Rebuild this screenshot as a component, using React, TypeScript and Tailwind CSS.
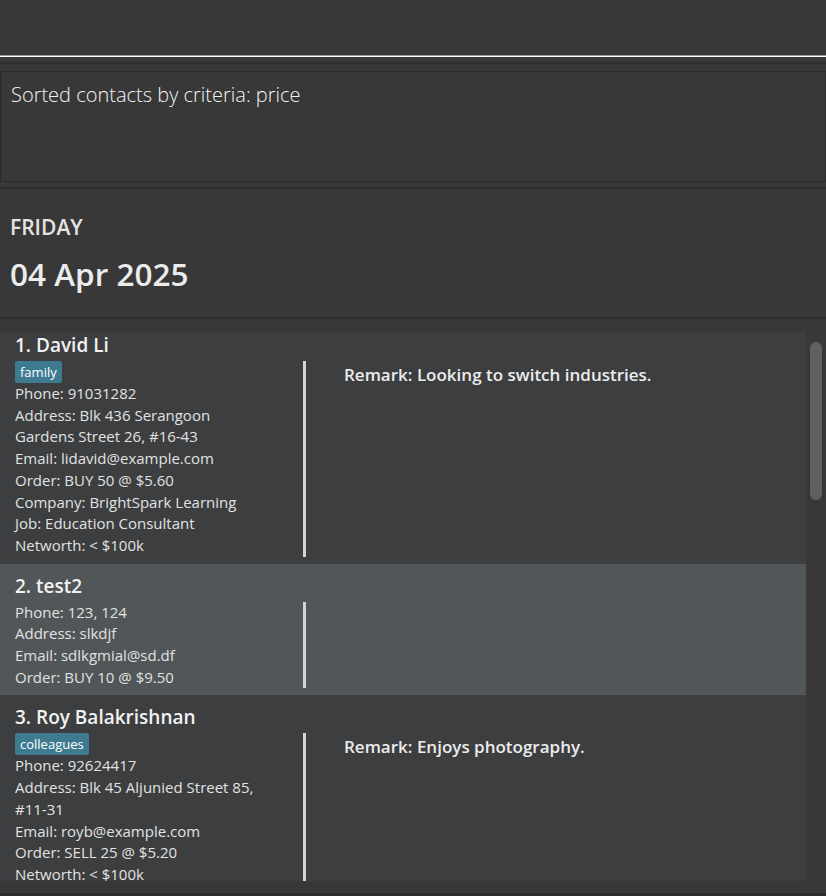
import React from "react";

const FONT = { fontFamily: '"Open Sans", "Noto Sans", sans-serif' };

type Person = {
  name: string;
  tag?: string;
  lines: string[];
  remark?: string;
  odd?: boolean;
};

const people: Person[] = [
  {
    name: "1. David Li",
    tag: "family",
    lines: [
      "Phone: 91031282",
      "Address: Blk 436 Serangoon Gardens Street 26, #16-43",
      "Email: lidavid@example.com",
      "Order: BUY 50 @ $5.60",
      "Company: BrightSpark Learning",
      "Job: Education Consultant",
      "Networth: < $100k",
    ],
    remark: "Remark: Looking to switch industries.",
  },
  {
    name: "2. test2",
    lines: ["Phone: 123, 124", "Address: slkdjf", "Email: sdlkgmial@sd.df", "Order: BUY 10 @ $9.50"],
    odd: true,
  },
  {
    name: "3. Roy Balakrishnan",
    tag: "colleagues",
    lines: [
      "Phone: 92624417",
      "Address: Blk 45 Aljunied Street 85, #11-31",
      "Email: royb@example.com",
      "Order: SELL 25 @ $5.20",
      "Networth: < $100k",
    ],
    remark: "Remark: Enjoys photography.",
  },
];

function Card({ p }: { p: Person }) {
  return (
    <div className={`${p.odd ? "bg-[#515658]" : "bg-[#3c3e40]"} pl-[15px] pt-[9px] pb-[7px]`}>
      <div className="text-[19px] leading-[26px] font-semibold text-[#f2f2f2] whitespace-nowrap">{p.name}</div>
      <div className="flex mt-[3px]">
        <div className="w-[291px] shrink-0 border-r-[3px] border-[#d4d4d4] pr-[32px] text-[15px] leading-[21.7px] text-[#e2e2e2]">
          {p.tag && (
            <div className="flex">
              <span className="bg-[#3e7b91] text-white text-[13px] leading-[22px] h-[22px] px-[5px] rounded-[2px]">
                {p.tag}
              </span>
            </div>
          )}
          {p.lines.map((l) => (
            <div key={l}>{l}</div>
          ))}
        </div>
        <div className="pl-[38px] pt-[3px] text-[17px] leading-[22px] font-semibold text-[#ececec]">
          {p.remark}
        </div>
      </div>
    </div>
  );
}

export default function App() {
  return (
    <div className="w-[826px] h-[896px] bg-[#383838] overflow-hidden flex flex-col" style={FONT}>
      <div className="h-[55px] shrink-0" />
      <div className="h-px bg-[#9a9a9a] shrink-0" />
      <div className="h-px bg-white shrink-0" />
      <div className="h-[5px] shrink-0" />
      <div className="h-[2px] bg-[#2d2d2d] shrink-0" />
      <div className="h-[7px] shrink-0" />
      <div className="h-[111px] shrink-0 border border-[#2b2b2b] px-[10px] pt-[9px]">
        <div className="text-[20px] leading-[28px] font-light text-[#f4f4f4]">Sorted contacts by criteria: price</div>
      </div>
      <div className="h-[5px] shrink-0" />
      <div className="h-[2px] bg-[#2d2d2d] shrink-0" />
      <div className="h-[128px] shrink-0 pl-[10px] pt-[24px]">
        <div className="text-[21px] leading-[28px] font-semibold text-[#e4e4e4]">FRIDAY</div>
        <div className="text-[31.5px] leading-[44px] font-semibold text-[#ececec] mt-[11px]">04 Apr 2025</div>
      </div>
      <div className="h-[2px] bg-[#2d2d2d] shrink-0" />
      <div className="h-[13px] shrink-0" />
      <div className="h-[549px] shrink-0 flex">
        <div className="w-[806px] overflow-hidden">
          <div className="-mt-[9px]">
            {people.map((p) => (
              <Card key={p.name} p={p} />
            ))}
          </div>
        </div>
        <div className="w-[20px] pl-[4px] pt-[10px]">
          <div className="w-[12px] h-[158px] rounded-[6px] bg-[#606060]" />
        </div>
      </div>
      <div className="h-[12px] shrink-0" />
      <div className="flex-1 bg-[#2e2e2e]" />
    </div>
  );
}
